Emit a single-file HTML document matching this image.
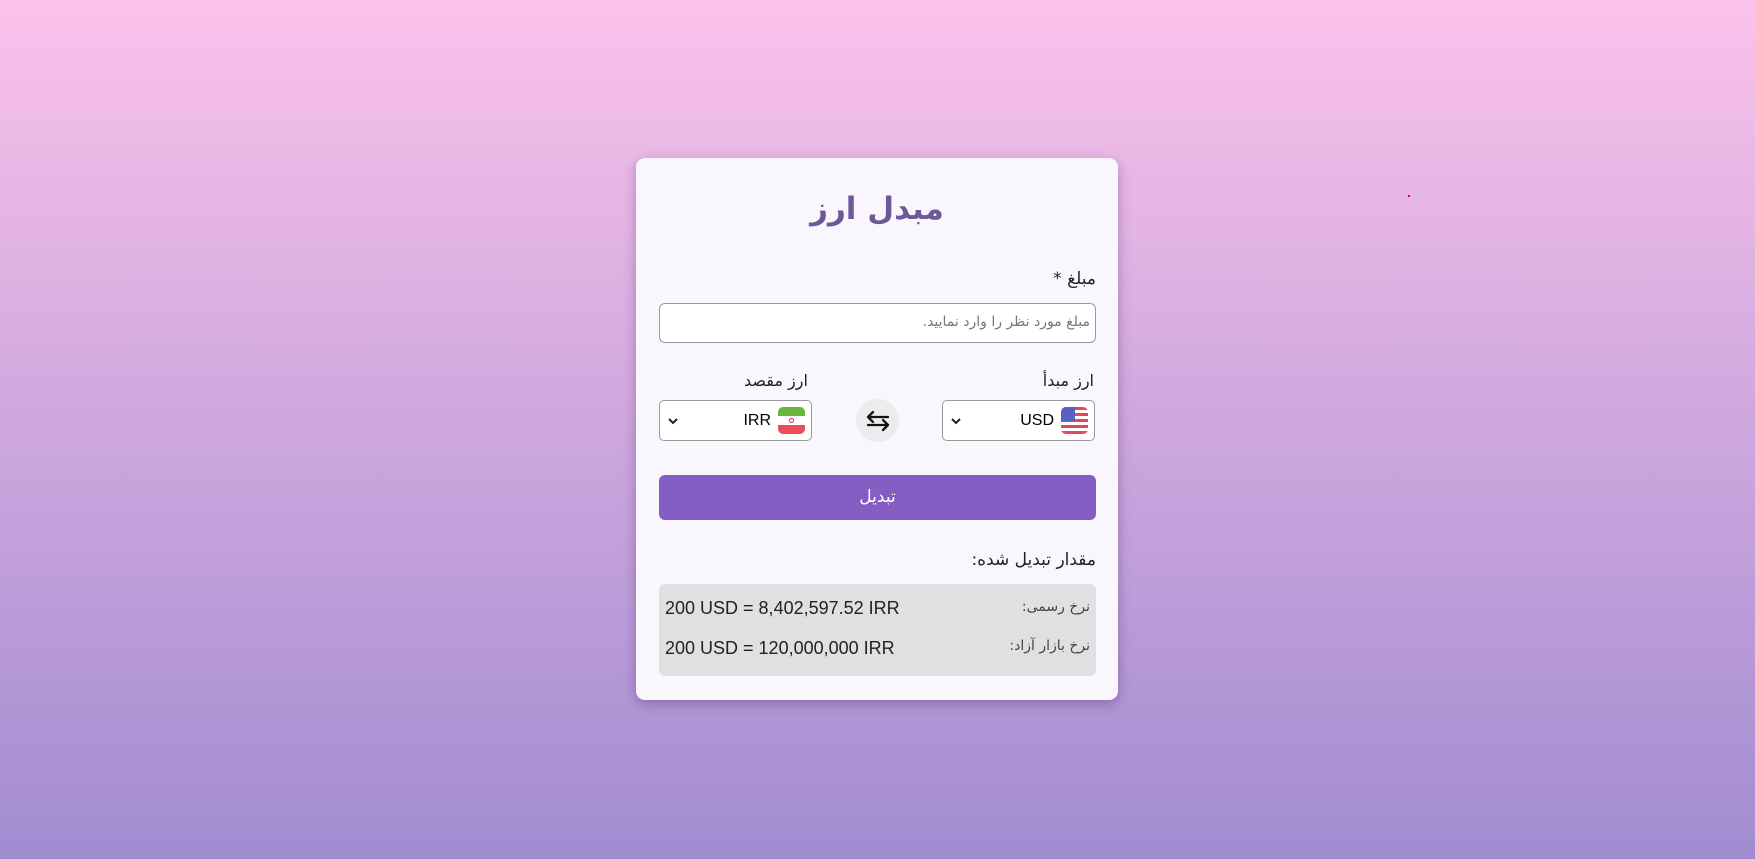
<!DOCTYPE html>
<html><head><meta charset="utf-8"><style>
html,body{margin:0;height:859px;width:1755px;overflow:hidden}
body{background:linear-gradient(to bottom,#fbc2eb,#a18cd1);font-family:"Liberation Sans","DejaVu Sans",sans-serif;position:relative}
.ar{font-family:"DejaVu Sans",sans-serif}
.card{position:absolute;left:636px;top:158px;width:482px;height:542px;background:#faf6fd;border-radius:9px;box-shadow:0 4px 12px rgba(60,30,90,.35)}
.abs{position:absolute}
.t{color:#222;font-size:18px}
.sel{position:absolute;top:242px;width:153px;height:41px;border:1px solid #999;border-radius:5px;background:#fff;box-sizing:border-box}
</style></head><body>
<div class="abs" style="left:1408px;top:195px;width:2px;height:2px;background:#e00"></div>
<div class="card" dir="ltr">
 <div class="abs ar" style="left:0;width:482px;top:33px;text-align:center;font-size:31px;font-weight:bold;color:#6b5a98" dir="rtl">مبدل ارز</div>
 <div class="abs t ar" style="right:22px;top:111px;font-size:17px" dir="rtl">مبلغ *</div>
 <div class="abs" style="left:23px;top:145px;width:437px;height:40px;border:1px solid #999;border-radius:6px;background:#fff;box-sizing:border-box"></div>
 <div class="abs ar" style="right:28px;top:156px;font-size:14px;color:#777" dir="rtl">مبلغ مورد نظر را وارد نمایید.</div>
 <div class="abs t ar" style="right:24px;top:213px;font-size:16px" dir="rtl">ارز مبدأ</div>
 <div class="abs t ar" style="left:108px;top:213px;font-size:16px" dir="rtl">ارز مقصد</div>
 <div class="sel" style="left:306px">
  <svg class="abs" style="left:8px;top:16px" width="10" height="8"><path d="M1 2l4 4 4-4" stroke="#222" stroke-width="2" fill="none"/></svg>
  <span class="abs" style="right:40px;top:11px;font-size:16px">USD</span>
  <svg class="abs" style="right:6px;top:6px" width="27" height="27" viewBox="0 0 27 27"><defs><clipPath id="c"><rect width="27" height="27" rx="5"/></clipPath></defs><g clip-path="url(#c)"><rect width="27" height="27" fill="#fff"/><g fill="#e5475a"><rect y="0" width="27" height="3"/><rect y="6" width="27" height="3"/><rect y="12" width="27" height="3"/><rect y="18" width="27" height="3"/><rect y="24" width="27" height="3"/></g><rect width="14" height="14" fill="#5a5fc4"/></g></svg>
 </div>
 <div class="abs" style="left:220px;top:241px;width:43px;height:43px;border-radius:50%;background:#ececec"></div>
 <svg class="abs" style="left:228px;top:252px" width="28" height="22" viewBox="0 0 28 22"><path d="M4 7h20M4 7l5-5M4 7l5 5M24 15H4M24 15l-5-5M24 15l-5 5" stroke="#111" stroke-width="2.3" fill="none" stroke-linecap="round"/></svg>
 <div class="sel" style="left:23px">
  <svg class="abs" style="left:8px;top:16px" width="10" height="8"><path d="M1 2l4 4 4-4" stroke="#222" stroke-width="2" fill="none"/></svg>
  <span class="abs" style="right:40px;top:11px;font-size:16px">IRR</span>
  <svg class="abs" style="right:6px;top:6px" width="27" height="27" viewBox="0 0 27 27"><defs><clipPath id="d"><rect width="27" height="27" rx="5"/></clipPath></defs><g clip-path="url(#d)"><rect width="27" height="9" fill="#6bb53a"/><rect y="9" width="27" height="9" fill="#fff"/><rect y="18" width="27" height="9" fill="#ef4a5a"/><circle cx="13.5" cy="13.5" r="2" fill="none" stroke="#d33" stroke-width="1"/></g></svg>
 </div>
 <div class="abs ar" style="left:23px;top:317px;width:437px;height:45px;background:#845ec2;border-radius:6px;color:#fff;font-size:17px;text-align:center;line-height:45px" dir="rtl">تبدیل</div>
 <div class="abs t ar" style="right:22px;top:392px;font-size:17px" dir="rtl">مقدار تبدیل شده:</div>
 <div class="abs" style="left:23px;top:426px;width:437px;height:92px;background:#e0e0e0;border-radius:6px"></div>
 <div class="abs ar" style="right:28px;top:441px;font-size:14px;color:#444" dir="rtl">نرخ رسمی:</div>
 <div class="abs ar" style="right:28px;top:480px;font-size:14px;color:#444" dir="rtl">نرخ بازار آزاد:</div>
 <div class="abs t" style="left:29px;top:440px">200 USD = 8,402,597.52 IRR</div>
 <div class="abs t" style="left:29px;top:480px">200 USD = 120,000,000 IRR</div>
</div>
</body></html>
